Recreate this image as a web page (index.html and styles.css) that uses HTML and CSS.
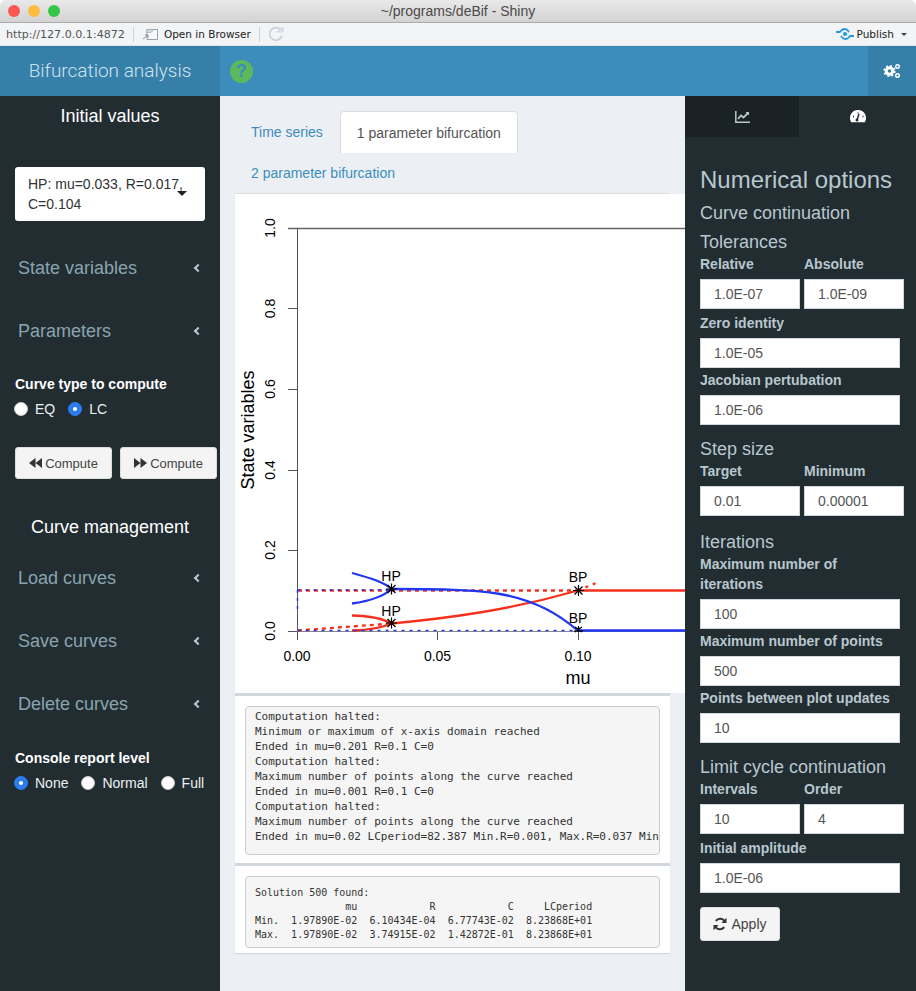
FILE: index.html
```html
<!DOCTYPE html>
<html lang="en">
<head>
<meta charset="utf-8">
<title>~/programs/deBif - Shiny</title>
<link rel="stylesheet" href="styles.css">
</head>
<body>
<div class="app">
  <div class="titlebar">
    <span class="light red"></span><span class="light yellow"></span><span class="light green"></span>
    <span class="window-title">~/programs/deBif - Shiny</span>
  </div>
  <div class="toolbar">
    <span class="url">http://127.0.0.1:4872</span>
    <span class="tool-sep"></span>
    <svg class="tool-icon" width="18" height="14" viewBox="0 0 18 14"><path d="M5 2.500h10.500v10H5z" fill="#f6f8fb" stroke="#9aa3ad"/><path d="M5 2.500h7l-3 3H5z" fill="#cfd8e3" stroke="#9aa3ad" stroke-width=".6"/><path d="M1 12l5-4M6 11V8H3" fill="none" stroke="#8a929b"/></svg>
    <span class="open-browser">Open in Browser</span>
    <span class="tool-sep"></span>
    <svg class="tool-icon" width="16" height="16" viewBox="0 0 16 16"><path d="M13.500 5A6.300 6.300 0 1 0 14 9.500" fill="none" stroke="#c6d1de" stroke-width="1.600"/><path d="M9 6h6V1z" fill="#dde5ee" stroke="#c6d1de" stroke-width=".7"/></svg>
    <span class="publish">
      <svg width="18" height="12" viewBox="0 0 18 12"><path d="M0 4h3.500C5 4 5 1 8.500 1S12 3 13 4M18 8h-3.500C13 8 13 11 9.500 11S6 9 5 8" fill="none" stroke="#1f97e8" stroke-width="1.800"/><circle cx="9" cy="6" r="2" fill="#1f97e8"/></svg>
      <span class="publish-text">Publish</span>
      <span class="publish-caret"></span>
    </span>
  </div>
  <header class="header">
    <div class="logo">Bifurcation analysis</div>
    <div class="help">?</div>
    <div class="gears">
      <svg width="18" height="16" viewBox="0 0 18 16">
        <g fill="none" stroke="#fff">
          <circle cx="6.500" cy="8" r="3.300" stroke-width="3"/>
          <circle cx="6.500" cy="8" r="5.300" stroke-width="1.600" stroke-dasharray="2 2.160"/>
          <circle cx="14.500" cy="3.500" r="1.800" stroke-width="1.400"/>
          <circle cx="14.500" cy="12.500" r="1.800" stroke-width="1.400"/>
        </g>
      </svg>
    </div>
  </header>
  <div class="body">
    <aside class="sidebar">
      <h3 class="side-title">Initial values</h3>
      <div class="select">HP: mu=0.033, R=0.017, C=0.104<span class="select-caret"></span></div>
      <div class="menu-item menu-first">State variables<span class="chev"></span></div>
      <div class="menu-item">Parameters<span class="chev"></span></div>
      <div class="side-label curve-label">Curve type to compute</div>
      <div class="radios">
        <span class="radio-item"><span class="radio"></span>EQ</span>
        <span class="radio-item"><span class="radio on"></span>LC</span>
      </div>
      <div class="compute-row">
        <button class="btn compute"><svg width="13" height="10" viewBox="0 0 13 10"><path d="M6.500 0v10L0 5zM13 0v10L6.500 5z" fill="#333"/></svg>Compute</button>
        <button class="btn compute"><svg width="13" height="10" viewBox="0 0 13 10"><path d="M0 0v10l6.500-5zM6.500 0v10L13 5z" fill="#333"/></svg>Compute</button>
      </div>
      <h3 class="side-title curve-title">Curve management</h3>
      <div class="menu-item menu-load">Load curves<span class="chev"></span></div>
      <div class="menu-item">Save curves<span class="chev"></span></div>
      <div class="menu-item">Delete curves<span class="chev"></span></div>
      <div class="side-label console-label">Console report level</div>
      <div class="radios">
        <span class="radio-item"><span class="radio"></span>None</span>
        <span class="radio-item"><span class="radio"></span>Normal</span>
        <span class="radio-item"><span class="radio"></span>Full</span>
      </div>
    </aside>
    <main class="main">
      <nav class="tabs">
        <a class="tab">Time series</a>
        <a class="tab active">1 parameter bifurcation</a>
        <a class="tab tab-wrap">2 parameter bifurcation</a>
      </nav>
      <div class="panel">
        <div class="plot">
          <svg class="plot-svg" width="450" height="499" viewBox="235 193 450 499">
            <g fill="none" stroke="#555">
              <path class="frame-top" d="M288 228.500H685"/>
              <path d="M297.500 228V631"/>
              <path d="M288 308.500h10M288 389.500h10M288 470.500h10M288 550.500h10M288 631.500h10"/>
              <path d="M297.500 631v9M437.500 631v9M578.500 631v9"/>
            </g>
            <path d="M297 631.500H685" fill="none" stroke="#888"/>
            <g fill="none" stroke="#f5301c" stroke-width="2.300">
              <path d="M352 615.500C370 616 384 619 391.500 623.500C384 627 370 630 352 630.500"/>
              <path d="M391.500 623.500C450 618 510 610 578 590.500"/>
              <path d="M578 590.500H685"/>
              <path d="M298 590.500H391M391 590.500H578M298 630.500L391.500 623.500" stroke-dasharray="4 4"/>
              <path d="M578 590.500L596 583" stroke-dasharray="3 5"/>
            </g>
            <g fill="none" stroke="#2036f0" stroke-width="2.300">
              <path d="M352 573C370 578 384 582 391.500 589C384 596 370 601 352 603.500"/>
              <path d="M391.500 589C430 589 470 589 500 594C535 600 560 615 577 630"/>
              <path d="M577 630.500H685"/>
              <path d="M297.500 590V610M297.500 590H391M297.500 630.500H578" stroke-dasharray="3 5" stroke-width="1.500"/>
            </g>
            <g class="star" stroke="#000" stroke-width="1.200">
              <path d="M386 589h11M391.500 583.500v11M387.500 585l8 8M395.500 585l-8 8"/>
              <path d="M386 623h11M391.500 617.500v11M387.500 619l8 8M395.500 619l-8 8"/>
              <path d="M573 590.500h11M578.500 585v11M574.500 586.500l8 8M582.500 586.500l-8 8"/>
              <path d="M574 631h9M578.500 626v6M575 627l7 5M582 627l-7 5"/>
            </g>
            <g class="plot-text">
              <text x="391" y="581" text-anchor="middle">HP</text>
              <text x="391" y="616" text-anchor="middle">HP</text>
              <text x="578" y="582" text-anchor="middle">BP</text>
              <text x="578" y="623" text-anchor="middle">BP</text>
              <text x="297" y="661" text-anchor="middle">0.00</text>
              <text x="437.500" y="661" text-anchor="middle">0.05</text>
              <text x="578" y="661" text-anchor="middle">0.10</text>
              <text class="axis-title" x="578" y="684" text-anchor="middle">mu</text>
              <text transform="translate(275 228) rotate(-90)" text-anchor="middle">1.0</text>
              <text transform="translate(275 308.500) rotate(-90)" text-anchor="middle">0.8</text>
              <text transform="translate(275 389) rotate(-90)" text-anchor="middle">0.6</text>
              <text transform="translate(275 470) rotate(-90)" text-anchor="middle">0.4</text>
              <text transform="translate(275 550) rotate(-90)" text-anchor="middle">0.2</text>
              <text transform="translate(275 631) rotate(-90)" text-anchor="middle">0.0</text>
              <text class="axis-title" transform="translate(254 430) rotate(-90)" text-anchor="middle">State variables</text>
            </g>
          </svg>
        </div>
        <div class="console-wrap">
<pre class="console">Computation halted:
Minimum or maximum of x-axis domain reached
Ended in mu=0.201 R=0.1 C=0
Computation halted:
Maximum number of points along the curve reached
Ended in mu=0.001 R=0.1 C=0
Computation halted:
Maximum number of points along the curve reached
Ended in mu=0.02 LCperiod=82.387 Min.R=0.001, Max.R=0.037 Min.C=0.068, Max.C=0.143</pre>
        </div>
        <div class="console-wrap second">
<pre class="console small">Solution 500 found:
               mu            R            C     LCperiod
Min.  1.97890E-02  6.10434E-04  6.77743E-02  8.23868E+01
Max.  1.97890E-02  3.74915E-02  1.42872E-01  8.23868E+01</pre>
        </div>
      </div>
    </main>
    <aside class="options">
      <div class="option-tabs">
        <div class="option-tab dark">
          <svg width="15" height="12" viewBox="0 0 15 12"><path d="M.8 0v11.200H15" fill="none" stroke="#b8c7ce" stroke-width="1.500"/><path d="M3 8l3-3.500 2.500 2L13 2" fill="none" stroke="#b8c7ce" stroke-width="1.800"/><path d="M10.500 1H14v3.500z" fill="#b8c7ce"/></svg>
        </div>
        <div class="option-tab">
          <svg width="16" height="13" viewBox="0 0 16 13"><path d="M8 0a8 8 0 0 1 6.800 12.200H1.200A8 8 0 0 1 8 0z" fill="#fff"/><path d="M6.800 10.500L9 4" stroke="#222d32" stroke-width="1.500"/><circle cx="7" cy="10" r="1.500" fill="#222d32"/><path d="M3 6.500h1M8 2.500v1M12.500 6.500h1" stroke="#222d32" stroke-width="1.500"/></svg>
        </div>
      </div>
      <div class="option-body">
        <h2 class="h-large">Numerical options</h2>
        <h3 class="h-mid h-cc">Curve continuation</h3>
        <h3 class="h-mid h-tol">Tolerances</h3>
        <div class="two">
          <div class="field"><label>Relative</label><div class="input">1.0E-07</div></div>
          <div class="field"><label>Absolute</label><div class="input">1.0E-09</div></div>
        </div>
        <div class="field wide"><label>Zero identity</label><div class="input">1.0E-05</div></div>
        <div class="field wide"><label>Jacobian pertubation</label><div class="input">1.0E-06</div></div>
        <h3 class="h-mid h-sec">Step size</h3>
        <div class="two">
          <div class="field"><label>Target</label><div class="input">0.01</div></div>
          <div class="field"><label>Minimum</label><div class="input">0.00001</div></div>
        </div>
        <h3 class="h-mid h-iter">Iterations</h3>
        <div class="field wide"><label>Maximum number of iterations</label><div class="input">100</div></div>
        <div class="field wide"><label>Maximum number of points</label><div class="input">500</div></div>
        <div class="field wide"><label>Points between plot updates</label><div class="input">10</div></div>
        <h3 class="h-mid h-sec">Limit cycle continuation</h3>
        <div class="two">
          <div class="field"><label>Intervals</label><div class="input">10</div></div>
          <div class="field"><label>Order</label><div class="input">4</div></div>
        </div>
        <div class="field wide"><label>Initial amplitude</label><div class="input">1.0E-06</div></div>
        <button class="btn apply"><svg width="14" height="14" viewBox="0 0 14 14"><path d="M12 5A5.300 5.300 0 0 0 2.800 3.800M2 9a5.300 5.300 0 0 0 9.200 1.200" fill="none" stroke="#333" stroke-width="2"/><path d="M13.500.800V6H8.300zM.5 13.200V8h5.200z" fill="#333"/></svg>Apply</button>
      </div>
    </aside>
  </div>
</div>
</body>
</html>
```

FILE: styles.css
```css
* { box-sizing: border-box; }
html, body { margin: 0; padding: 0; height: 100%; overflow: hidden; background: #fff; }
body { font-family: "Liberation Sans", Arial, sans-serif; font-size: 14px; color: #333; }
.app { width: 916px; height: 991px; display: flex; flex-direction: column; overflow: hidden; border-radius: 6px 6px 0 0; }

.titlebar { height: 23px; flex: none; display: flex; align-items: center; padding-left: 8px; gap: 8px; position: relative; background: linear-gradient(#e9e9e9, #d2d2d2); border-bottom: 1px solid #acacac; }
.light { width: 12px; height: 12px; border-radius: 50%; }
.red { background: #fc5753; }
.yellow { background: #fdbc40; }
.green { background: #33c748; }
.window-title { position: absolute; left: 0; right: 0; text-align: center; font-size: 14px; color: #4a4a4a; }

.toolbar { height: 23px; flex: none; display: flex; align-items: center; background: #f2f4f6; border-bottom: 1px solid #dfe2e5; padding-left: 6px; font-family: "DejaVu Sans", sans-serif; font-size: 10.500px; color: #222; }
.url { color: #555; font-size: 11.100px; }
.tool-sep { width: 1px; height: 15px; background: #cfd3d7; margin: 0 8px; }
.tool-icon { flex: none; }
.open-browser { margin-left: 4px; }
.publish { margin-left: auto; display: flex; align-items: center; margin-right: 9px; }
.publish-text { margin-left: 3px; }
.publish-caret { margin-left: 7px; border-top: 3px solid #444; border-left: 3px solid transparent; border-right: 3px solid transparent; }

.header { height: 50px; flex: none; display: flex; align-items: center; background: #3c8dbc; }
.logo { width: 220px; height: 100%; background: #367fa9; color: #cfe3ef; font-family: Roboto, "Liberation Sans", sans-serif; font-size: 19px; font-weight: 300; line-height: 50px; text-align: center; }
.help { width: 23px; height: 23px; margin-left: 10px; border-radius: 50%; background: #5cb85c; color: #3c8dbc; font-weight: 700; font-size: 18px; line-height: 23px; text-align: center; }
.gears { margin-left: auto; width: 48px; height: 100%; background: #367fa9; display: flex; align-items: center; justify-content: center; }

.body { flex: 1; display: flex; min-height: 0; }

.sidebar { width: 220px; flex: none; background: #222d32; padding: 0 15px; color: #fff; display: flex; flex-direction: column; }
.side-title { margin: 9px 0 0; font-size: 18px; font-weight: 400; line-height: 22px; text-align: center; color: #fff; }
.select { margin-top: 40px; height: 54px; width: 190px; flex: none; background: #fff; border-radius: 3px; padding: 7px 13px; font-size: 14px; line-height: 20px; color: #333; position: relative; }
.select-caret { position: absolute; right: 18px; top: 24px; border-top: 5px solid #222; border-left: 5px solid transparent; border-right: 5px solid transparent; }
.menu-item { height: 63px; flex: none; font-size: 18px; line-height: 63px; color: #8aa4af; padding-left: 3px; position: relative; }
.menu-first { margin-top: 16px; }
.chev { position: absolute; right: 4px; top: 28px; width: 6px; height: 6px; border-left: 2px solid #b8c7ce; border-bottom: 2px solid #b8c7ce; transform: rotate(45deg); }
.side-label { font-weight: 700; font-size: 14px; line-height: 20px; color: #fff; }
.curve-label { margin-top: 11px; }
.radios { display: flex; gap: 13px; margin-top: 5px; height: 20px; align-items: center; color: #ecf0f1; margin-left: -1px; }
.radio-item { display: flex; align-items: center; gap: 7px; }
.radio { width: 14px; height: 14px; border-radius: 50%; background: #fff; border: 1px solid #ccc; position: relative; flex: none; }
.radio-item:first-child .radio { background: #fff; }
.sidebar .radios:last-child .radio-item:first-child .radio,
.radio.on { background: #2c7cf0; border-color: #2c7cf0; }
.sidebar .radios:last-child .radio-item:first-child .radio::after,
.radio.on::after { content: ""; position: absolute; left: 4px; top: 4px; width: 4px; height: 4px; background: #fff; border-radius: 50%; }
.compute-row { display: flex; gap: 8px; margin-top: 28px; width: 202px; }
.btn { border: 1px solid #ddd; border-radius: 3px; background: #f4f4f4; color: #444; font: 14px "Liberation Sans", Arial, sans-serif; display: flex; align-items: center; justify-content: center; gap: 3px; padding: 0; }
.compute { width: 97px; height: 32px; flex: none; font-size: 13px; }
.curve-title { margin-top: 37px; }
.menu-load { margin-top: 9px; }
.console-label { margin-top: 12px; }

.main { width: 465px; flex: none; background: #ecf0f5; padding: 15px 0 0 15px; position: relative; }
.tabs { width: 436px; display: flex; flex-wrap: wrap; height: 82px; align-content: flex-start; }
.tab { height: 42px; line-height: 42px; padding: 0 16px; color: #3c8dbc; font-size: 14px; white-space: nowrap; }
.tab.active { width: 178px; padding: 0; text-align: center; background: #fff; color: #555; border: 1px solid #ddd; border-bottom: 0; border-radius: 4px 4px 0 0; margin-left: 1px; height: 42px; }
.tab-wrap { height: 40px; line-height: 40px; flex: none; }
.panel { width: 435px; background: #fff; border-top: 1px solid #ddd; box-shadow: 0 1px 1px rgba(0,0,0,.1); }
.plot { height: 499px; width: 450px; background: #fff; position: relative; }
.plot-svg { position: absolute; left: 0; top: -1px; display: block; }
.frame-top { stroke: #666; stroke-width: 1.500; }
.plot-text { font: 14px "Liberation Sans", Arial, sans-serif; fill: #000; }
.plot-text .axis-title { font-size: 18px; }
.console-wrap { border-top: 3px solid #d2d6de; padding: 10px 10px 8px; }
.console-wrap.second { padding-bottom: 5px; }
.console { margin: 0; height: 149px; overflow: hidden; padding: 2px 9px; background: #f5f5f5; border: 1px solid #ccc; border-radius: 4px; font: 11px/15px "DejaVu Sans Mono", monospace; color: #333; }
.console.small { height: 72px; padding: 9px 9px; font-size: 10px; line-height: 14px; }

.options { flex: 1; background: #222d32; color: #b8c7ce; }
.option-tabs { display: flex; height: 41px; }
.option-tab { flex: 1; display: flex; align-items: center; justify-content: center; }
.option-tab.dark { flex: none; width: 114px; background: #1a2226; }
.option-body { padding: 0 12px 0 15px; }
.h-large { margin: 28px 0 0; font-size: 24px; line-height: 30px; font-weight: 400; color: #b8c7ce; }
.h-mid { margin: 0; font-size: 18px; line-height: 20px; font-weight: 400; color: #b8c7ce; }
.h-cc { margin-top: 8px; }
.h-tol { margin-top: 9px; }
.h-sec { margin-top: 14px; }
.h-iter { margin-top: 16px; }
.two { display: flex; gap: 4px; }
.two .field { width: 100px; }
.field label { display: block; font-weight: 700; font-size: 14px; line-height: 20px; color: #b8c7ce; margin-bottom: 5px; }
.two .field label { margin-top: 2px; }
.wide { width: 200px; margin-top: 4px; }
.h-iter + .wide { margin-top: 2px; }
.wide + .wide { margin-top: 2px; }
.input { height: 30px; background: #fff; border: 1px solid #d2d6de; padding: 0 13px; line-height: 28px; font-size: 14px; color: #555; }
.apply { width: 80px; height: 34px; margin-top: 14px; gap: 4px; }
```
